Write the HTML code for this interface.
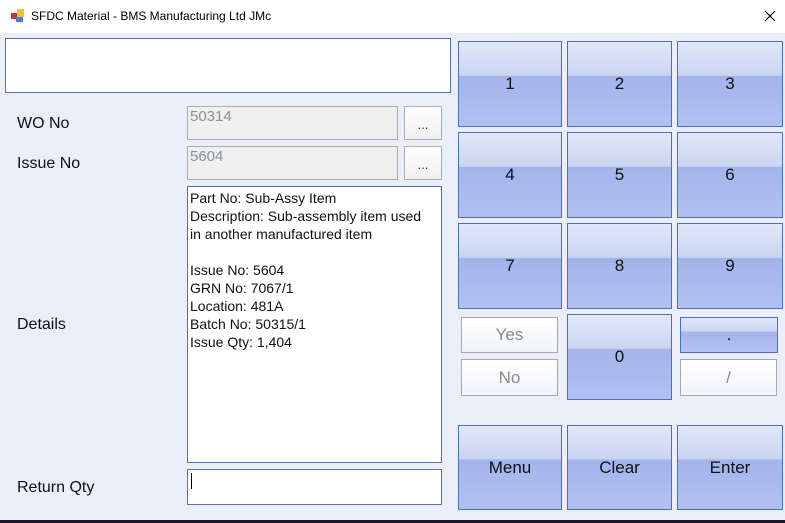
<!DOCTYPE html>
<html><head><style>
*{margin:0;padding:0;box-sizing:border-box}
body{width:785px;height:523px;overflow:hidden;background:#eaeef9;font-family:"Liberation Sans",Arial,sans-serif;position:relative}
.a{position:absolute}
#tb{left:0;top:0;width:785px;height:33px;background:#fff}
.t{font-size:12px;color:#000}
.lbl{font-size:16px;color:#111}
.fld{background:#f0f0f0;border:1px solid #adadad;color:#8a8f9a;font-size:15px;padding:1px 2px}
.dot{background:linear-gradient(#fff,#f0f0f0);border:1px solid #adadad;font-size:13px;text-align:center;color:#333;padding-top:10px}
.b{border:1px solid #4d6fba;background:linear-gradient(to bottom,#e2e8f8 0%,#cad4f2 40%,#a2b4ea 40.5%,#b0c1f1 100%);font-size:17px;color:#111;display:flex;align-items:center;justify-content:center}
.w{border:1px solid #a8a8a8;background:linear-gradient(#fff,#f1f3f9);font-size:17px;color:#8a8a8a;display:flex;align-items:center;justify-content:center}
</style></head><body>
<div class="a" id="tb"></div>
<svg class="a" style="left:11px;top:9px" width="14" height="14"><rect x="0" y="4" width="6" height="6" fill="#c33"/><rect x="6" y="0" width="7" height="8" fill="#f2c230"/><rect x="5" y="8" width="7" height="5" fill="#4a7bd0"/></svg>
<div class="a t" style="left:31px;top:9px">SFDC Material - BMS Manufacturing Ltd JMc</div>
<svg class="a" style="left:764px;top:10px" width="12" height="12"><path d="M1 1L11 11M11 1L1 11" stroke="#000" stroke-width="1.2"/></svg>
<div class="a" style="left:5px;top:38px;width:446px;height:55px;background:#fff;border:1px solid #5570b0"></div>
<div class="a lbl" style="left:17px;top:115px">WO No</div>
<div class="a lbl" style="left:17px;top:155px">Issue No</div>
<div class="a lbl" style="left:17px;top:316px">Details</div>
<div class="a lbl" style="left:17px;top:479px">Return Qty</div>
<div class="a fld" style="left:187px;top:106px;width:211px;height:34px">50314</div>
<div class="a fld" style="left:187px;top:146px;width:211px;height:34px">5604</div>
<div class="a dot" style="left:404px;top:106px;width:38px;height:34px">...</div>
<div class="a dot" style="left:404px;top:146px;width:38px;height:34px">...</div>
<div class="a" style="left:187px;top:186px;width:255px;height:277px;background:#fff;border:1px solid #5570b0;font-size:14px;line-height:18px;padding:2px 6px 2px 2px;color:#111">Part No: Sub-Assy Item<br>Description: Sub-assembly item used<br>in another manufactured item<br><br>Issue No: 5604<br>GRN No: 7067/1<br>Location: 481A<br>Batch No: 50315/1<br>Issue Qty: 1,404</div>
<div class="a" style="left:187px;top:469px;width:255px;height:36px;background:#fff;border:1px solid #5570b0"><div style="position:absolute;left:3px;top:3px;width:1px;height:16px;background:#000"></div></div>
<div class="a b" style="left:458px;top:41px;width:104px;height:86px">1</div>
<div class="a b" style="left:567px;top:41px;width:105px;height:86px">2</div>
<div class="a b" style="left:677px;top:41px;width:106px;height:86px">3</div>
<div class="a b" style="left:458px;top:132px;width:104px;height:86px">4</div>
<div class="a b" style="left:567px;top:132px;width:105px;height:86px">5</div>
<div class="a b" style="left:677px;top:132px;width:106px;height:86px">6</div>
<div class="a b" style="left:458px;top:223px;width:104px;height:86px">7</div>
<div class="a b" style="left:567px;top:223px;width:105px;height:86px">8</div>
<div class="a b" style="left:677px;top:223px;width:106px;height:86px">9</div>
<div class="a b" style="left:567px;top:314px;width:105px;height:86px">0</div>
<div class="a w" style="left:461px;top:317px;width:97px;height:36px">Yes</div>
<div class="a w" style="left:461px;top:359px;width:97px;height:37px">No</div>
<div class="a b" style="left:680px;top:317px;width:98px;height:36px">.</div>
<div class="a w" style="left:680px;top:359px;width:97px;height:37px">/</div>
<div class="a b" style="left:458px;top:425px;width:104px;height:85px">Menu</div>
<div class="a b" style="left:567px;top:425px;width:105px;height:85px">Clear</div>
<div class="a b" style="left:677px;top:425px;width:106px;height:85px">Enter</div>
<div class="a" style="left:0;top:520px;width:785px;height:3px;background:#1b1530"></div>
</body></html>
